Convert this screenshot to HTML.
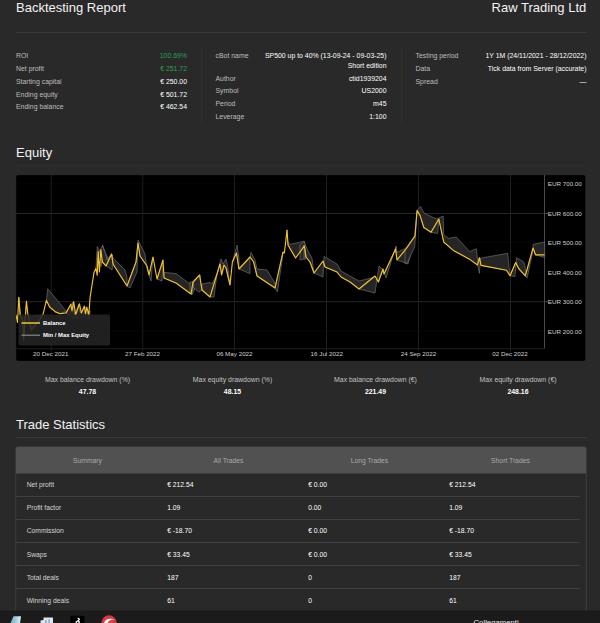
<!DOCTYPE html>
<html lang="en">
<head>
<meta charset="utf-8">
<title>Backtesting Report</title>
<style>
html,body{margin:0;padding:0;background:#292929;}
body{width:600px;height:623px;overflow:hidden;position:relative;font-family:"Liberation Sans",Arial,sans-serif;color:#fff;}
#page{position:absolute;left:0;top:0;width:1200px;height:1246px;transform:scale(.5);transform-origin:0 0;background:#292929;overflow:hidden;}
.abs{position:absolute;}
h1,h2{margin:0;font-weight:400;font-size:26px;line-height:30px;position:absolute;white-space:nowrap;color:#f2f2f2;}
.hr{position:absolute;left:32px;width:1141px;height:1.4px;background:#4a4a4a;}
.info{position:absolute;font-size:13.8px;line-height:16px;}
.info .row{position:absolute;left:0;right:0;height:16px;white-space:nowrap;}
.info .l{position:absolute;left:0;color:#bebebe;}
.info .v{position:absolute;right:0;text-align:right;color:#fff;}
.green{color:#2aa052 !important;}
.vdiv{position:absolute;width:2px;background:#303030;top:96px;height:150px;}
#chart{position:absolute;left:31px;top:349px;width:1141px;height:374px;background:#000;border:1px solid #3a3a3a;border-radius:5px;box-sizing:border-box;overflow:hidden;}
#chart svg{position:absolute;left:-32px;top:-350px;}
.dd{position:absolute;width:287px;text-align:center;font-size:13.8px;line-height:16px;white-space:nowrap;}
.dd .t{color:#c2c2c2;}
.dd .n{font-weight:700;color:#fff;margin-top:8px;}
#tbl{position:absolute;left:31.4px;top:893.4px;width:1142px;height:400px;border:1px solid #555;border-radius:4px 4px 0 0;box-sizing:border-box;overflow:hidden;}
#tbl .head{position:absolute;left:0;top:0;width:100%;height:52.6px;background:#515151;border-radius:3px 3px 0 0;}
table{position:absolute;left:0;top:0;border-collapse:collapse;width:1128px;table-layout:fixed;font-size:13.5px;}
th{height:52.6px;font-weight:400;color:#a9a9a9;text-align:center;padding:1px 0 0 3px;box-sizing:border-box;}
td{height:46.2px;padding:0 0 1px 20px;box-sizing:border-box;border-bottom:1px solid #585858;color:#fff;text-align:left;}
td:first-child{color:#d4d4d4;padding-left:21px;}
#taskbar{position:absolute;left:0;top:1221px;width:1200px;height:30px;background:#1b1b1b;}
</style>
</head>
<body>
<div id="page">
  <h1 style="left:32px;top:-1px;">Backtesting Report</h1>
  <h1 style="right:27.5px;top:-1px;">Raw Trading Ltd</h1>
  <div class="hr" style="top:64px;"></div>

  <div class="info" style="left:32px;top:104px;width:342px;">
    <div class="row" style="top:0"><span class="l">ROI</span><span class="v green">100.69%</span></div>
    <div class="row" style="top:25.5px"><span class="l">Net profit</span><span class="v green">€ 251.72</span></div>
    <div class="row" style="top:51px"><span class="l">Starting capital</span><span class="v">€ 250.00</span></div>
    <div class="row" style="top:76.5px"><span class="l">Ending equity</span><span class="v">€ 501.72</span></div>
    <div class="row" style="top:102px"><span class="l">Ending balance</span><span class="v">€ 462.54</span></div>
  </div>
  <div class="vdiv" style="left:402px;"></div>
  <div class="info" style="left:431px;top:104px;width:342px;">
    <div class="row" style="top:0"><span class="l">cBot name</span><span class="v">SP500 up to 40% (13-09-24 - 09-03-25)</span></div>
    <div class="row" style="top:20px"><span class="v">Short edition</span></div>
    <div class="row" style="top:45px"><span class="l">Author</span><span class="v">ctid1939204</span></div>
    <div class="row" style="top:70px"><span class="l">Symbol</span><span class="v">US2000</span></div>
    <div class="row" style="top:96px"><span class="l">Period</span><span class="v">m45</span></div>
    <div class="row" style="top:122px"><span class="l">Leverage</span><span class="v">1:100</span></div>
  </div>
  <div class="vdiv" style="left:802px;"></div>
  <div class="info" style="left:831px;top:104px;width:342px;">
    <div class="row" style="top:0"><span class="l">Testing period</span><span class="v">1Y 1M (24/11/2021 - 28/12/2022)</span></div>
    <div class="row" style="top:25.5px"><span class="l">Data</span><span class="v">Tick data from Server (accurate)</span></div>
    <div class="row" style="top:51px"><span class="l">Spread</span><span class="v">—</span></div>
  </div>

  <h2 style="left:32px;top:289px;">Equity</h2>
  <div class="hr" style="top:331px;background:#333;"></div>

  <div id="chart">
    <svg width="1200" height="760" viewBox="0 0 1200 760" font-family="Liberation Sans, Arial, sans-serif">
      <g stroke="#0a0a0a" stroke-width="1.5">
        <line x1="32" x2="1089" y1="367.6" y2="367.6"/>
        <line x1="32" x2="1089" y1="485.2" y2="485.2"/>
        <line x1="32" x2="1089" y1="544.4" y2="544.4"/>
        <line x1="32" x2="1089" y1="662.6" y2="662.6"/>
      </g>
      <g stroke="#262626" stroke-width="2">
        <line x1="32" x2="1089" y1="427" y2="427"/>
        <line x1="32" x2="1089" y1="603.4" y2="603.4"/>
      </g>
      <g stroke="#1e1e1e" stroke-width="2">
        <line x1="32" x2="1089" y1="697.5" y2="697.5"/>
        <line x1="102.5" x2="102.5" y1="350" y2="702"/>
        <line x1="285.5" x2="285.5" y1="350" y2="702"/>
        <line x1="469" x2="469" y1="350" y2="702"/>
        <line x1="653" x2="653" y1="350" y2="702"/>
        <line x1="837" x2="837" y1="350" y2="702"/>
        <line x1="1021" x2="1021" y1="350" y2="702"/>
      </g>
      <line x1="1089" x2="1089" y1="350" y2="697" stroke="#4a4a4a" stroke-width="2"/>
      <g stroke="#4a4a4a" stroke-width="2">
        <line x1="1089" x2="1096" y1="427" y2="427"/>
        
        <line x1="1089" x2="1096" y1="603.4" y2="603.4"/>
      </g>
      <g fill="#252525" stroke="#858585" stroke-width="1.1" stroke-linejoin="round">
        <polygon points="92.7,600.7 95.4,577.5 132,621.8 120.5,627.6 110.9,623.8 99.3,614.1"/>
        <polygon points="37.6,594.9 40.3,629.6 45.3,641.1 47.3,681.6 53,602.6 51.1,629.6 47.3,645 40.3,633.4"/>
        <polygon points="55.7,629.6 62.7,633.4 78.1,631.5 85.8,629.6 78.1,641.1 62.7,660.4"/>
        <polygon points="132,625.7 145.5,604.5 149.4,629.6 157.1,608.4 160.9,625.7 171.4,614.1 176.4,629.6 180.2,621.8 178.3,641.1 170.6,633.4 159,637.3 143.6,635.3"/>
        <polygon points="191.8,537.1 194.5,492.8 199.5,502.4"/>
        <polygon points="202.2,533.2 205.3,490.1 211,506.2 218.8,521.7 225.3,510.1 218.8,533.2 211,517.8 205.3,496.6"/>
        <polygon points="201.2,500 204.8,491.2 210.8,507.2 214,520 223.2,507.2 226,516 250,540 254,554 254,572 226,528 223.2,508 212,532 204,524"/>
        <polygon points="212,532 224,540 226,528 223.2,508"/>
        <polygon points="254,572 260,576 274,544 276,486 272,524"/>
        <polygon points="276,486 276,480 290,508 294,538 298,550 294,532 280,512"/>
        <polygon points="298,550 302,562 306,514"/>
        <polygon points="314,558 324,562 326,520"/>
        <polygon points="328,556 328.8,544.8 352,547.2 380,568 386,564 382,588 352,566"/>
        <polygon points="382,588 384,590 400,554 400,550 386,564"/>
        <polygon points="380,586 380,564 387.2,564 384,588"/>
        <polygon points="387.2,564 399.2,550 404,580 398,584 387.2,576"/>
        <polygon points="404,580 404,568 420,564.8 424,568 434,548 428,594 420,594"/>
        <polygon points="434,548 442,518 446,528 452,518 456,536 460,570 452,536 448,530 443.2,550 440,528"/>
        <polygon points="464.8,524 470,506 474,490 478,516 478,538 472.8,506"/>
        <polygon points="478,538 500,514 500,547.2"/>
        <polygon points="500,514 502,504.8 510,520 514,538 534,540 550,566 550,576 514,552 507.2,524"/>
        <polygon points="550,576 554.8,584 566,508 566,504"/>
        <polygon points="574,460 574.8,482 580,488.8 598,484.8 608.8,482 612,496 610,520 608.8,492 591.2,516 576,490"/>
        <polygon points="600,490 608,484 618,506 624,516 628,546 620,524 612,514 608,490 600,506"/>
        <polygon points="600,506 600,520 608,518 608,490"/>
        <polygon points="628,546 646,554 648,512.8 674,528 682,542 718,562 750,554 750,552 718,578 700,564 682,554 674,544 650,534 646,522"/>
        <polygon points="718,578 750,586 758,532 764,538 766,538 756.8,564 750,552"/>
        <polygon points="766,538 772,556 792,492.8 791.2,498 768,548"/>
        <polygon points="791.2,498 792,492.8 794,504.8 812,496 830,471.2 812,498 794,520"/>
        <polygon points="794,520 816,528 830,474 812,498"/>
        <polygon points="810,500.8 810,527.4 814.8,525 829.3,493.6 834.2,423.5 829.3,471.8"/>
        <polygon points="834.2,421.1 841.4,412.9 847.7,425.9 872.8,438 886.4,432.2 887.3,469.4 897,476.7 912.5,474.2 939.5,503.2 952.6,497.4 956,525 955,529.8 938.1,517.7 906.7,500.8 887.3,483.9 877.7,438 862.2,464.6 847.7,454.9 840,430.7"/>
        <polygon points="862.2,464.6 875.2,467 877.7,440.4"/>
        <polygon points="955,529.8 958.9,546.7 960.8,516.3 1015.4,506.6 1018.8,541.9 1020.2,551.6 1013,540.5 962.2,530.8 958.9,515.3"/>
        <polygon points="1020.2,551.6 1029.9,553 1033.3,515.3 1047.8,524 1050.7,537.1 1050.7,551.6 1037.2,537.1 1031.4,525"/>
        <polygon points="1050.7,551.6 1054.1,556.4 1066.2,500.8 1066.2,488.7 1089.4,483.9 1089.4,515.3 1071,509.5 1066.2,496"/>
      </g>
      <polyline fill="none" stroke="#f0c02a" stroke-width="2.3" stroke-linejoin="round" points="32,629.6 35,645 37.6,594.8 40.4,629.6 45.4,641.2 47.2,679.6 53,602.6 55.8,629.6 62.6,660.4 78,641.2 85.8,629.6 92.8,600.6 99.2,614 110.8,623.8 120.4,627.6 132,625.8 141.6,608.4 144,621.8 147.4,603.4 151.4,629.6 159,607.6 162.8,625.8 168.6,612.2 171,627.6 173.6,614.2 177.6,629.6 180.2,594.8 188,544.8 191.8,537 194.4,550.6 196.4,503 198.8,544 201.6,499 204.8,524 212,532 223.2,508 226,528 254,572 272,524 276,486 280,512 294,532 298,550 306,514 314,558 326,520 328,556 352,566 382,588 386,564 399.2,550 404,580 420,594 434,548 440,528 443.2,550 448,530 452,536 460,570 464.8,524 472.8,506 478,538 500,514 507.2,524 514,552 550,576 566,504 568.8,506 574,460 576,490 591.2,516 608.8,492 612,514 620,524 628,546 646,522 650,534 674,544 682,554 700,564 718,578 750,552 756.8,564 766,538 768,548 791.2,498 794,520 812,498 830,472 834,421 840,430.8 847.6,455 862,464.6 877.6,438 887.4,484 906.6,500.8 938,517.8 955,530 958.8,515.4 962,530.8 1013,540.4 1020,551.6 1031.4,525 1037.2,537 1050.6,551.6 1066,496 1071,509.6 1089,509.6"/>
      <g font-size="12.5" fill="#cfcfcf">
        <text x="1095.5" y="372.4">EUR 700.00</text>
        <text x="1095.5" y="431.6">EUR 600.00</text>
        <text x="1095.5" y="490">EUR 500.00</text>
        <text x="1095.5" y="549.2">EUR 400.00</text>
        <text x="1095.5" y="608.2">EUR 300.00</text>
        <text x="1095.5" y="667.4">EUR 200.00</text>
      </g>
      <g font-size="12.5" fill="#cfcfcf" text-anchor="middle">
        <text x="101.5" y="712.6">20 Dec 2021</text>
        <text x="285" y="712.6">27 Feb 2022</text>
        <text x="469" y="712.6">06 May 2022</text>
        <text x="653.5" y="712.6">16 Jul 2022</text>
        <text x="837" y="712.6">24 Sep 2022</text>
        <text x="1020" y="712.6">02 Dec 2022</text>
      </g>
      <rect x="37" y="629" width="183" height="62" rx="3" fill="#242424" fill-opacity=".88"/>
      <line x1="43" x2="80" y1="646" y2="646" stroke="#f2c42c" stroke-width="3"/>
      <line x1="43" x2="80" y1="670.4" y2="670.4" stroke="#9a9a9a" stroke-width="2"/>
      <g font-size="11.8" font-weight="700" fill="#fff">
        <text x="86" y="650.2">Balance</text>
        <text x="86" y="674.6">Min / Max Equity</text>
      </g>
    </svg>
  </div>

  <div class="dd" style="left:31.5px;top:751px;"><div class="t">Max balance drawdown (%)</div><div class="n">47.78</div></div>
  <div class="dd" style="left:321.5px;top:751px;"><div class="t">Max equity drawdown (%)</div><div class="n">48.15</div></div>
  <div class="dd" style="left:607.5px;top:751px;"><div class="t">Max balance drawdown (€)</div><div class="n">221.49</div></div>
  <div class="dd" style="left:892.5px;top:751px;"><div class="t">Max equity drawdown (€)</div><div class="n">248.16</div></div>

  <h2 style="left:32px;top:833px;">Trade Statistics</h2>
  <div class="hr" style="top:874px;"></div>

  <div id="tbl">
    <div class="head"></div>
    <table>
      <thead><tr><th>Summary</th><th>All Trades</th><th>Long Trades</th><th>Short Trades</th></tr></thead>
      <tbody>
        <tr><td>Net profit</td><td>€ 212.54</td><td>€ 0.00</td><td>€ 212.54</td></tr>
        <tr><td>Profit factor</td><td>1.09</td><td>0.00</td><td>1.09</td></tr>
        <tr><td>Commission</td><td>€ -18.70</td><td>€ 0.00</td><td>€ -18.70</td></tr>
        <tr><td>Swaps</td><td>€ 33.45</td><td>€ 0.00</td><td>€ 33.45</td></tr>
        <tr><td>Total deals</td><td>187</td><td>0</td><td>187</td></tr>
        <tr><td>Winning deals</td><td>61</td><td>0</td><td>61</td></tr>
        <tr><td>Losing deals</td><td>126</td><td>0</td><td>126</td></tr>
      </tbody>
    </table>
  </div>

  <div id="taskbar">
    <svg class="abs" style="left:0;top:0" width="1200" height="30" viewBox="0 1221 1200 30">
      <defs>
        <linearGradient id="g1" x1="0" y1="0" x2="1" y2="0"><stop offset="0" stop-color="#6fa9bb"/><stop offset=".6" stop-color="#a9d3e0"/><stop offset="1" stop-color="#e6f2f6"/></linearGradient>
        <radialGradient id="g4" cx=".45" cy=".4" r=".6"><stop offset="0" stop-color="#e2484c"/><stop offset=".8" stop-color="#d2333a"/><stop offset="1" stop-color="#e88a8c"/></radialGradient>
      </defs>
      <polygon points="27,1232.5 42,1232.5 40,1247 20.5,1247" fill="url(#g1)"/>
      <polygon points="87,1235 106,1235 106,1247 81,1247 81,1241 87,1240" fill="#dbe6ef"/>
      <rect x="90" y="1240" width="3.5" height="7" fill="#8fb2d4"/><rect x="96.5" y="1238.5" width="3.5" height="9" fill="#8fb2d4"/>
      <rect x="141" y="1231.5" width="28" height="20" rx="3" fill="#000"/>
      <path d="M156,1236.5 l3,2 -3,3 3,2.5 -2.5,3 M156,1241.5 l-4,2.5 2,3" stroke="#fff" stroke-width="2.2" fill="none" stroke-linecap="round" stroke-linejoin="round"/>
      <circle cx="218" cy="1245.5" r="15" fill="url(#g4)"/>
      <path d="M208,1247 c1,-9 12,-12 22,-8 c-8,-1 -14,2 -15,8 z" fill="#fff"/>
    </svg>
    <div class="abs" style="left:947px;top:15px;font-size:15.5px;color:#e6e6e6;line-height:18px;">Collegamenti</div>
  </div>
</div>
</body>
</html>
